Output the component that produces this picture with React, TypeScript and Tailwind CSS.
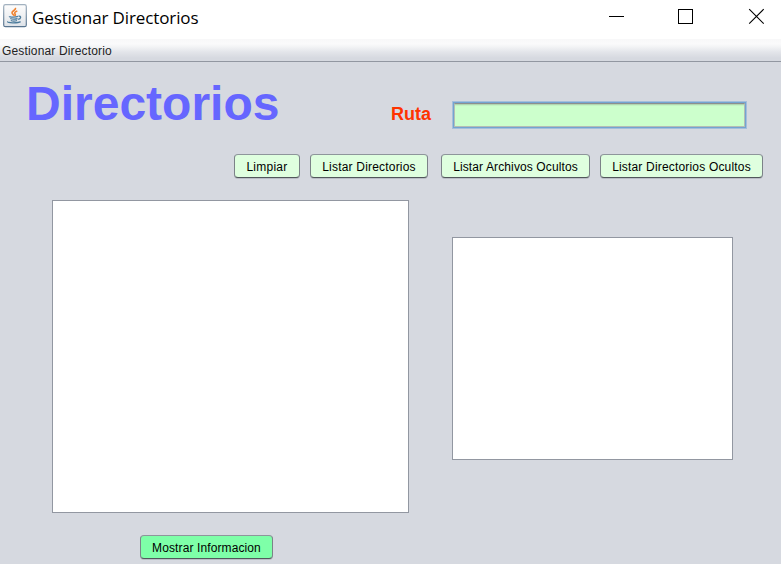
import type { ReactNode } from "react";

function JavaIcon() {
  return (
    <svg width="24" height="24" viewBox="0 0 24 24" fill="none" className="block">
      <defs>
        <linearGradient id="tile" x1="0" y1="0" x2="0" y2="1">
          <stop offset="0" stopColor="#fdfdfd" />
          <stop offset="0.5" stopColor="#f0f1f3" />
          <stop offset="1" stopColor="#dde2e8" />
        </linearGradient>
        <linearGradient id="edge" x1="0" y1="0" x2="0" y2="1">
          <stop offset="0" stopColor="#a3b2c0" />
          <stop offset="1" stopColor="#58748f" />
        </linearGradient>
      </defs>
      <rect x="0.7" y="0.7" width="22.6" height="22" rx="1.8" fill="url(#tile)" stroke="url(#edge)" strokeWidth="1.2" />
      <path d="M12.3 3.800c1.200 2.200-3.400 2.900-3.300 5 0 1.200 1.700 1.800 2 3M14.300 7c-2.400.8-3.200 1.900-2.200 3 .6.800.4 1.300-.2 2" stroke="#ee8331" strokeWidth="1.600" />
      <path d="M6.500 12.300c-.5 1 6.500 1 8.500.1M7.300 14.500c1.500.8 5.500.8 7.300.1M7.800 16.500c1.500.6 4.500.6 6.200 0M15.500 12.200c3-.5 2.800 2.400-.4 3.200M4.800 17.500c-1.500 1.700 10.300 1.900 12.800.1" stroke="#4b7b9c" strokeWidth="1.300" />
    </svg>
  );
}

function Button({ className, children }: { className: string; children: ReactNode }) {
  return (
    <button
      className={`flex h-[24px] shrink-0 items-center justify-center whitespace-nowrap rounded-[4px] border border-t-[#8e959b] border-x-[#7c8288] border-b-[#51575b] pt-px text-[12px] leading-[14px] text-black shadow-[0_1px_0_#b9bdc5] ${className}`}
    >
      {children}
    </button>
  );
}

export default function App() {
  return (
    <div className="flex h-[564px] w-[781px] flex-col overflow-hidden bg-[#d6d9e0] font-['Liberation_Sans',Arial,sans-serif]">
      <header className="flex h-[39px] shrink-0 items-start bg-white pl-[3px]">
        <div className="pt-[4px]"><JavaIcon /></div>
        <h1 className="ml-[5px] mt-[5px] whitespace-nowrap font-['Open_Sans',sans-serif] text-[17px] leading-[25px] tracking-[-0.12px] text-black">
          Gestionar Directorios
        </h1>
        <svg width="160" height="20" viewBox="0 0 160 20" className="ml-auto mr-[15px] mt-[6px]" fill="none" stroke="#000">
          <path d="M3 10.500h15M72.500 3.500h14v14h-14z" shapeRendering="crispEdges" />
          <path d="M143.200 3.200l14.500 14.500M157.700 3.200l-14.500 14.500" strokeWidth="1.100" />
        </svg>
      </header>
      <nav className="flex h-[23px] shrink-0 border-b border-[#9297a1] bg-[linear-gradient(#f8f8f9_0px,#fafafb_5px,#f2f3f5_8px,#e3e5ea_13px,#d6d9e0_19px,#d6d9e0_22px)] pl-[2px] pt-[5px] text-[12px] leading-[14px] tracking-[0.16px] text-[#232323]">
        Gestionar Directorio
      </nav>
      <main className="flex flex-1 flex-col">
        <div className="flex h-[92px] shrink-0">
          <h2 className="w-[364px] pl-[26px] pt-[14px] text-[48px] font-bold leading-[56px] text-[#6666ff]">Directorios</h2>
          <label className="mt-[41px] w-[88px] pl-[27px] text-[18px] font-bold leading-[22px] text-[#ff3300]">Ruta</label>
          <div className="mt-[39px] h-[28px] w-[295px] border border-[#a6bedb]">
            <div className="h-full border border-[#73a4d1]">
              <input className="block h-full w-full border border-x-[#b5bdb5] border-b-[#b5bdb5] border-t-[#8d8e8f] bg-[#ccffcc] shadow-[inset_0_1px_0_#b0d6b0,inset_0_2px_0_#c4f3c4] outline-none" />
            </div>
          </div>
        </div>
        <div className="flex h-[46px] shrink-0 pl-[234px]">
          <Button className="w-[66px] bg-[#dfffdf] tracking-[0.25px]">Limpiar</Button>
          <Button className="ml-[10px] w-[118px] bg-[#dfffdf] tracking-[0.2px]">Listar Directorios</Button>
          <Button className="ml-[13px] w-[149px] bg-[#dfffdf] tracking-[0.11px]">Listar Archivos Ocultos</Button>
          <Button className="ml-[10px] w-[163px] bg-[#dfffdf] tracking-[0.18px]">Listar Directorios Ocultos</Button>
        </div>
        <div className="flex h-[335px] shrink-0 items-start pl-[52px]">
          <textarea className="block h-[313px] w-[357px] resize-none border border-[#9297a1] bg-white" />
          <textarea className="ml-[43px] mt-[37px] block h-[223px] w-[281px] resize-none border border-[#9297a1] bg-white" />
        </div>
        <div className="pl-[140px]">
          <Button className="w-[133px] bg-[#7effa8] tracking-[0.11px]">Mostrar Informacion</Button>
        </div>
      </main>
    </div>
  );
}
